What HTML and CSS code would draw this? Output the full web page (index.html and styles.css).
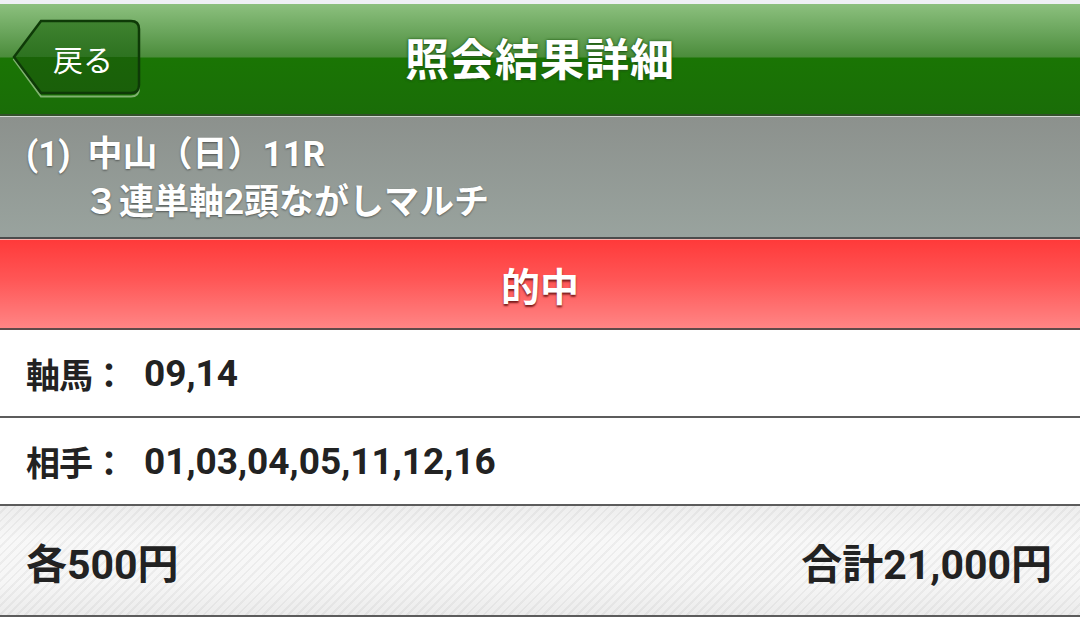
FILE: index.html
```html
<!DOCTYPE html>
<html lang="ja">
<head>
<meta charset="utf-8">
<title>照会結果詳細</title>
<link rel="stylesheet" href="styles.css">
</head>
<body>
<div class="topstrip"></div>
<header class="header">
  <div class="back">
    <svg class="back-shape" width="130" height="80" viewBox="0 0 130 80">
      <defs>
        <linearGradient id="bg" x1="0" y1="0" x2="0" y2="1">
          <stop offset="0" stop-color="#3f8330"/>
          <stop offset="0.5" stop-color="#2d7220"/>
          <stop offset="0.5" stop-color="#1a6408"/>
          <stop offset="1" stop-color="#1a5f0a"/>
        </linearGradient>
      </defs>
      <path d="M2 39 L29 4 H119 Q127 4 127 12 V68 Q127 76 119 76 H29 Z" fill="none" stroke="#7fb26f" stroke-width="2" transform="translate(0 1.5)"/>
      <path d="M2 38 L29 2 H119 Q127 2 127 10 V66 Q127 74 119 74 H29 Z" fill="url(#bg)" stroke="#0e3a07" stroke-width="2.5"/>
    </svg>
    <span class="back-label">戻る</span>
  </div>
  <h1 class="title">照会結果詳細</h1>
  <div class="spacer"></div>
</header>
<section class="race">
  <div class="race-line"><span class="race-no">(1)</span>中山（日）11R</div>
  <div class="race-line race-sub">３連単軸2頭ながしマルチ</div>
</section>
<section class="hit">的中</section>
<div class="row"><span class="label">軸馬：</span><span class="nums">09,14</span></div>
<div class="row"><span class="label">相手：</span><span class="nums">01,03,04,05,11,12,16</span></div>
<footer class="total">
  <span>各500円</span>
  <span>合計21,000円</span>
</footer>
</body>
</html>
```
FILE: styles.css
```css
html, body {
  margin: 0;
  padding: 0;
  background: #ffffff;
  width: 1080px;
  height: 619px;
  overflow: hidden;
  font-family: "Roboto", "Noto Sans CJK JP", sans-serif;
}

.topstrip {
  height: 4px;
  background: #eef0f4;
}

.header {
  height: 110px;
  display: grid;
  grid-template-columns: 1fr auto 1fr;
  align-items: center;
  background: linear-gradient(to bottom, #8cc07e 0px, #6aa55c 28px, #4b8c3b 53px, #1a7504 54px, #1a6d08 100%);
  border-bottom: 2px solid #33502c;
}

.back {
  position: relative;
  margin-left: 12px;
  width: 130px;
  height: 80px;
  display: flex;
  align-items: center;
}

.back-shape {
  position: absolute;
  left: 0;
  top: 0;
}

.back-label {
  position: relative;
  margin-left: 41px;
  font-family: "Noto Sans CJK JP", sans-serif;
  font-size: 30px;
  color: #ffffff;
  line-height: 1;
  margin-top: -3px;
}

.title {
  margin: 0 0 4px 0;
  font-family: "Noto Sans CJK JP", sans-serif;
  font-weight: 700;
  font-size: 44px;
  color: #ffffff;
  letter-spacing: 1px;
  text-shadow: 0 0 3px #1e5a12, 0 1px 2px #1e5a12;
  line-height: 1;
}

.race {
  box-sizing: border-box;
  height: 123px;
  border-top: 1px solid #d3d9d3;
  padding: 14px 0 0 26px;
  background: linear-gradient(to bottom, #8c918d, #99a39e);
  border-bottom: 2px solid #4c4c4c;
  color: #ffffff;
  font-weight: 700;
  font-size: 35px;
  line-height: 48px;
  text-shadow: 0 1px 2px rgba(0, 0, 0, 0.45);
}

.race-no {
  margin-right: 17px;
}

.race-sub {
  padding-left: 58px;
}

.hit {
  border-top: 1px solid #f4b4b0;
  height: 88px;
  display: flex;
  align-items: center;
  justify-content: center;
  background: linear-gradient(to bottom, #ff3a3a, #ff5656 45%, #ff8585);
  border-bottom: 2px solid #5e4a4a;
  color: #ffffff;
  font-family: "Noto Sans CJK JP", sans-serif;
  font-weight: 700;
  font-size: 39px;
  text-shadow: 0 2px 2px #7a1c1c;
}

.row {
  height: 86px;
  display: flex;
  align-items: center;
  padding-left: 26px;
  border-bottom: 2px solid #5c5c5c;
  color: #222222;
  font-weight: 700;
}

.label {
  font-family: "Noto Sans CJK JP", sans-serif;
  font-size: 34px;
  letter-spacing: -1px;
}

.nums {
  margin-left: 19px;
  font-size: 37px;
}

.total {
  height: 109px;
  display: flex;
  align-items: center;
  justify-content: space-between;
  padding: 0 28px 0 26px;
  background:
    repeating-linear-gradient(135deg, rgba(255,255,255,0) 0 4px, rgba(0,0,0,0.045) 4px 6px),
    linear-gradient(to bottom, #ededed, #f8f8f8 30%, #f6f6f6 70%, #ececec);
  border-bottom: 2px solid #5c5c5c;
  color: #222222;
  font-weight: 700;
  font-size: 41px;
}
```
